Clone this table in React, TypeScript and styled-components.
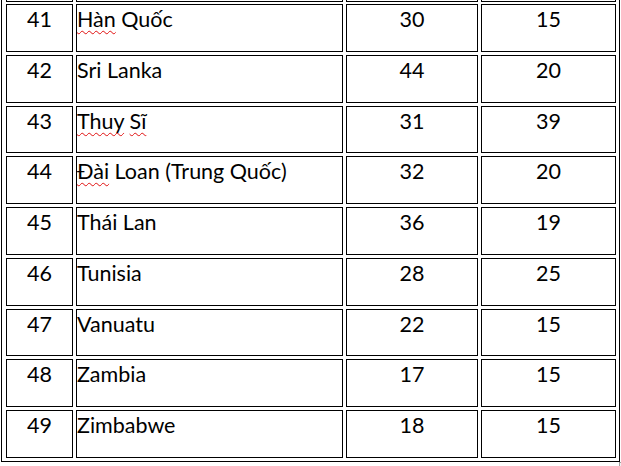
import React from "react";
import styled, { createGlobalStyle } from "styled-components";

const Global = createGlobalStyle`
  html, body { margin: 0; padding: 0; background: #fff; }
`;

const Page = styled.div`
  position: relative;
  width: 621px;
  height: 466px;
  overflow: hidden;
`;

const Table = styled.div`
  margin-left: 1px;
  width: 619px;
  box-sizing: border-box;
  border: 1px solid #000;
  border-top: none;
  padding: 0 3px 3px 4px;
  display: grid;
  grid-template-columns: 67px 267px 132px 135px;
  grid-template-rows: auto;
  grid-auto-rows: 47.75px;
  column-gap: 3px;
  row-gap: 3px;
  font-family: Lato, "Open Sans", sans-serif;
  font-size: 21.5px;
  line-height: 20px;
  color: #000;
`;

const Stub = styled.div`
  height: 2px;
  margin-bottom: -1px;
  box-sizing: border-box;
  border: 1px solid #000;
  border-top: none;
`;

const Cell = styled.div<{ $align?: "left" | "center" }>`
  box-sizing: border-box;
  border: 1px solid #000;
  padding-top: 4px;
  text-align: ${(p) => p.$align ?? "center"};
  white-space: nowrap;
`;

const Spell = styled.span`
  text-decoration: underline wavy #e01010;
  text-decoration-thickness: 1px;
  text-underline-offset: 3px;
  text-decoration-skip-ink: none;
`;

const Handle = styled.div`
  position: absolute;
  left: 619px;
  top: 462px;
  width: 4px;
  height: 6px;
  border: 1px solid #a0a0a0;
  background: #f0f0f0;
`;

type Row = { n: number; name: React.ReactNode; a: number; b: number };

const rows: Row[] = [
  { n: 41, name: <><Spell>Hàn</Spell> Quốc</>, a: 30, b: 15 },
  { n: 42, name: "Sri Lanka", a: 44, b: 20 },
  { n: 43, name: <><Spell>Thuy</Spell> <Spell>Sĩ</Spell></>, a: 31, b: 39 },
  { n: 44, name: <><Spell>Đài</Spell> Loan (Trung Quốc)</>, a: 32, b: 20 },
  { n: 45, name: "Thái Lan", a: 36, b: 19 },
  { n: 46, name: "Tunisia", a: 28, b: 25 },
  { n: 47, name: "Vanuatu", a: 22, b: 15 },
  { n: 48, name: "Zambia", a: 17, b: 15 },
  { n: 49, name: "Zimbabwe", a: 18, b: 15 },
];

export default function App() {
  return (
    <Page>
      <Global />
      <Table>
        <Stub />
        <Stub />
        <Stub />
        <Stub />
        {rows.map((r) => (
          <React.Fragment key={r.n}>
            <Cell>{r.n}</Cell>
            <Cell $align="left">{r.name}</Cell>
            <Cell>{r.a}</Cell>
            <Cell>{r.b}</Cell>
          </React.Fragment>
        ))}
      </Table>
      <Handle />
    </Page>
  );
}
